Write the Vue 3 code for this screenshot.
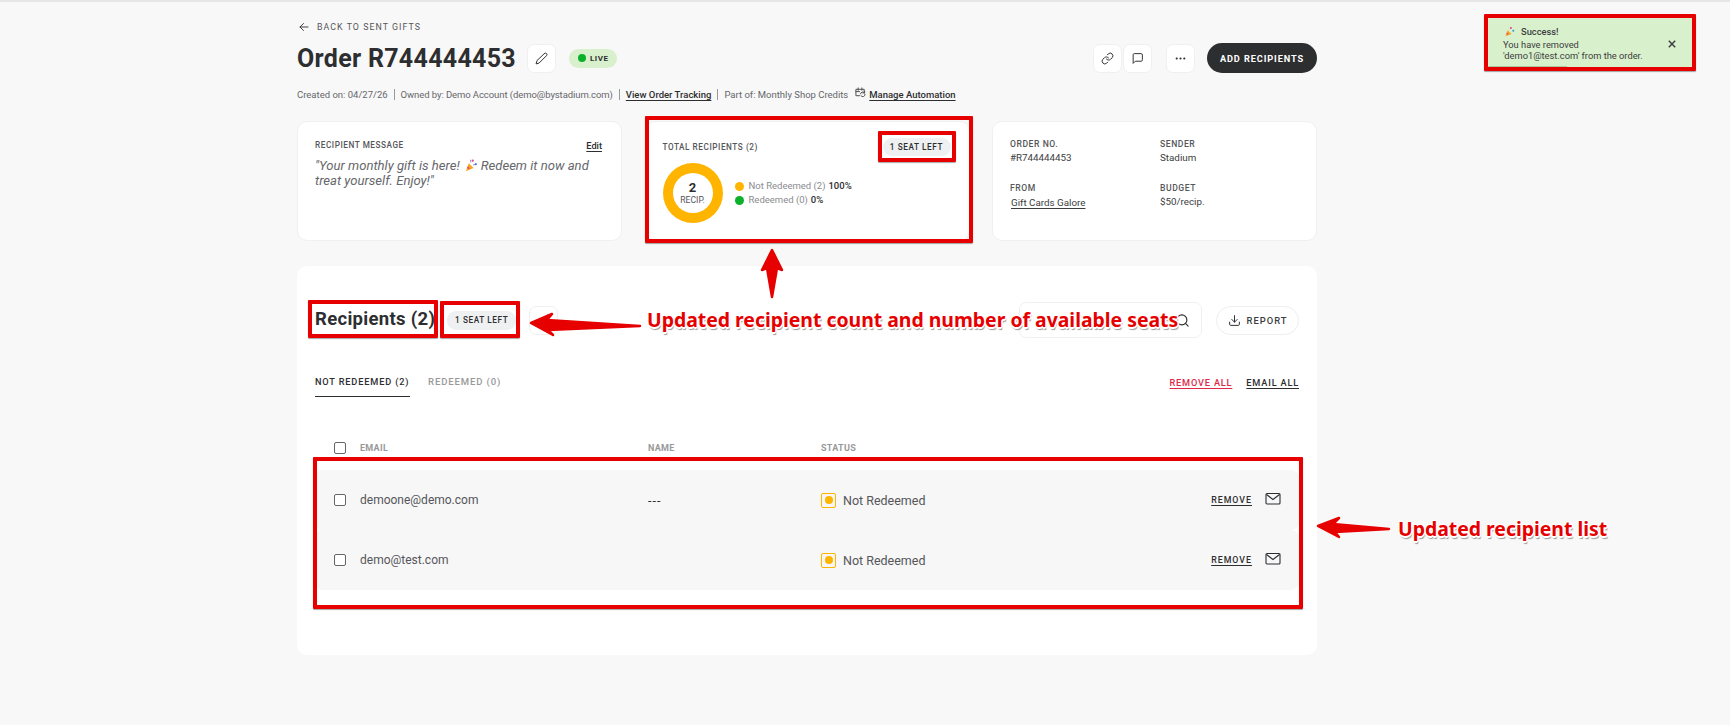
<script setup>
const recipients = [
  { email: "demoone@demo.com", name: "---" },
  { email: "demo@test.com", name: "" },
];

// red review markup drawn over the page
const marks = [
  { x: 645, y: 116, w: 328, h: 127 },
  { x: 878, y: 131, w: 78, h: 31 },
  { x: 308, y: 300, w: 130, h: 38 },
  { x: 440, y: 301, w: 80, h: 37 },
  { x: 313, y: 457, w: 990, h: 152 },
  { x: 1484, y: 14, w: 212, h: 57 },
];

const box = (m) => ({
  left: m.x + "px",
  top: m.y + "px",
  width: m.w + "px",
  height: m.h + "px",
});
</script>

<template>
  <div class="page">
    <div class="top-line"></div>
    <div class="wrap">
      <div class="back">
        <svg width="12" height="12" viewBox="0 0 24 24" class="ico"><path d="M20 12H4M11 5l-7 7 7 7" /></svg>
        <span>BACK TO SENT GIFTS</span>
      </div>

      <div class="title-row">
        <h1>Order R744444453</h1>
        <button class="icon-btn edit">
          <svg width="13" height="13" viewBox="0 0 24 24" class="ico"><path d="M17 3a2.85 2.83 0 1 1 4 4L7.5 20.5 2 22l1.5-5.5Z" /></svg>
        </button>
        <span class="live"><i></i>LIVE</span>
        <div class="spacer"></div>
        <button class="icon-btn">
          <svg width="13" height="13" viewBox="0 0 24 24" class="ico"><path d="M10 13a5 5 0 0 0 7.54.54l3-3a5 5 0 0 0-7.07-7.07l-1.72 1.71" /><path d="M14 11a5 5 0 0 0-7.54-.54l-3 3a5 5 0 0 0 7.07 7.07l1.71-1.71" /></svg>
        </button>
        <button class="icon-btn chat">
          <svg width="13" height="13" viewBox="0 0 24 24" class="ico"><path d="M21 15a2 2 0 0 1-2 2H8l-4 4V5a2 2 0 0 1 2-2h13a2 2 0 0 1 2 2z" /></svg>
        </button>
        <button class="icon-btn more">
          <svg width="13" height="13" viewBox="0 0 24 24"><circle cx="5" cy="12" r="2" fill="#2d2e30" /><circle cx="12" cy="12" r="2" fill="#2d2e30" /><circle cx="19" cy="12" r="2" fill="#2d2e30" /></svg>
        </button>
        <button class="add">ADD RECIPIENTS</button>
      </div>

      <div class="meta">
        <span>Created on: 04/27/26</span>
        <b class="sep"></b>
        <span class="owner">Owned by: Demo Account (demo@bystadium.com)</span>
        <b class="sep"></b>
        <a>View Order Tracking</a>
        <b class="sep"></b>
        <span>Part of: Monthly Shop Credits</span>
        <svg width="11" height="11" viewBox="0 0 24 24" class="ico auto"><path d="M10 19H2V5h18v4M2 10h8M7 2v5M15 2v5" /><path d="M22 16a5 5 0 0 1-9 3M12 15a5 5 0 0 1 9-2M21 9v4h-4" /></svg>
        <a>Manage Automation</a>
      </div>

      <div class="cards">
        <div class="card msg">
          <div class="msg-head">
            <span class="label">RECIPIENT MESSAGE</span>
            <a class="edit-link">Edit</a>
          </div>
          <div class="msg-text">
            <div class="msg-line">"Your monthly gift is here!<svg width="14" height="14" viewBox="0 0 16 16" class="party"><path d="M2 15l3.5-9 5.5 5.500z" fill="#f5a623" /><path d="M4.200 9.500l2.600 2.600-1.600.7-1.700-1.700z" fill="#e0457b" /><circle cx="10" cy="3" r="1.200" fill="#e0457b" /><circle cx="13.500" cy="7" r="1.200" fill="#3f8fe0" /><path d="M7.500 5c.5-1.500 0-3 0-3M10.500 8c1.500-1 3.500-.5 3.500-.5" stroke="#7a5bd0" fill="none" /></svg>Redeem it now and</div>
            <div class="msg-line">treat yourself. Enjoy!"</div>
          </div>
        </div>

        <div class="card total">
          <div class="total-head">
            <span class="label">TOTAL RECIPIENTS (2)</span>
            <span class="seats">1 SEAT LEFT</span>
          </div>
          <div class="total-body">
            <div class="donut">
              <div class="donut-hole"><strong>2</strong><small>RECIP.</small></div>
            </div>
            <div class="legend">
              <div><i class="amber"></i><span>Not Redeemed (2)</span> <b>100%</b></div>
              <div><i class="green"></i><span>Redeemed (0)</span> <b>0%</b></div>
            </div>
          </div>
        </div>

        <div class="card info">
          <div>
            <div class="label">ORDER NO.</div>
            <div class="val">#R744444453</div>
          </div>
          <div>
            <div class="label">SENDER</div>
            <div class="val">Stadium</div>
          </div>
          <div>
            <div class="label">FROM</div>
            <a class="val link">Gift Cards Galore</a>
          </div>
          <div>
            <div class="label">BUDGET</div>
            <div class="val">$50/recip.</div>
          </div>
        </div>
      </div>

      <section class="main">
        <div class="main-head">
          <h2>Recipients (2)</h2>
          <span class="seats big">1 SEAT LEFT</span>
          <button class="icon-btn main-edit">
            <svg width="13" height="13" viewBox="0 0 24 24" class="ico"><path d="M17 3a2.85 2.83 0 1 1 4 4L7.5 20.5 2 22l1.5-5.5Z" /></svg>
          </button>
          <div class="spacer"></div>
          <div class="search">
            <svg width="15" height="15" viewBox="0 0 24 24" class="ico"><circle cx="11" cy="11" r="8" /><path d="M21 21l-4.300-4.300" /></svg>
          </div>
          <button class="report">
            <svg width="13" height="13" viewBox="0 0 24 24" class="ico"><path d="M3 15v4a2 2 0 0 0 2 2h14a2 2 0 0 0 2-2v-4M7 10l5 5 5-5M12 15V3" /></svg>
            REPORT
          </button>
        </div>

        <div class="tabs">
          <span class="tab on">NOT REDEEMED (2)</span>
          <span class="tab">REDEEMED (0)</span>
          <div class="spacer"></div>
          <a class="bulk red">REMOVE ALL</a>
          <a class="bulk">EMAIL ALL</a>
        </div>

        <div class="thead row-grid">
          <span class="check"></span>
          <span>EMAIL</span>
          <span>NAME</span>
          <span>STATUS</span>
        </div>

        <div class="rows">
          <div v-for="r in recipients" :key="r.email" class="row row-grid">
            <span class="check"></span>
            <span class="email">{{ r.email }}</span>
            <span class="name">{{ r.name }}</span>
            <span class="status"><em><i></i></em>Not Redeemed</span>
            <span class="actions">
              <a>REMOVE</a>
              <svg width="16" height="14" viewBox="0 0 16 14" class="mail"><rect x="1" y="1.500" width="14" height="10.500" rx="1" /><path d="M1.500 2.500L8 7.500l6.500-5" /></svg>
            </span>
          </div>
        </div>
      </section>
    </div>

    <div class="toast">
      <div class="toast-title">
        <svg width="11" height="11" viewBox="0 0 16 16"><path d="M2 15l3.500-9 5.500 5.500z" fill="#f5a623" /><path d="M4.200 9.500l2.600 2.600-1.600.7-1.700-1.700z" fill="#e0457b" /><circle cx="10" cy="3" r="1.500" fill="#e0457b" /><circle cx="13.500" cy="7" r="1.500" fill="#3f8fe0" /></svg>
        <span>Success!</span>
      </div>
      <div class="toast-body">You have removed<br />'demo1@test.com' from the order.</div>
      <svg width="8" height="8" viewBox="0 0 10 10" class="toast-x"><path d="M1 1l8 8M9 1l-8 8" /></svg>
      <div class="toast-bar"></div>
    </div>

    <div v-for="(m, i) in marks" :key="i" class="mark" :style="box(m)"></div>

    <svg class="arrows" width="1730" height="725" viewBox="0 0 1730 725">
      <g fill="#e60000" stroke="#e60000" stroke-width="2.500" stroke-linejoin="round">
        <path d="M772 250L782 270L777 268L772 297L767 268L762 270Z" />
        <path d="M531 323L552 314L547 320L640 326L548 330L553 335Z" />
        <path d="M1318 526L1339 518L1333 524L1389 529L1335 532L1339 537Z" />
      </g>
    </svg>
    <div class="note note-a">Updated recipient count and number of available seats</div>
    <div class="note note-b">Updated recipient list</div>
  </div>
</template>

<style>
html,
body {
  margin: 0;
  background: #f8f8f8;
}
</style>

<style scoped>
.page {
  position: relative;
  width: 1730px;
  height: 725px;
  overflow: hidden;
  background: #f8f8f8;
  font-family: Roboto, "Liberation Sans", sans-serif;
  color: #2d2e30;
}

.top-line {
  height: 2px;
  background: #e6e6e8;
}

.wrap {
  width: 1020px;
  margin-left: 297px;
  padding-top: 18px;
}

.spacer {
  flex: 1;
}

.ico {
  fill: none;
  stroke: #2d2e30;
  stroke-width: 1.8;
  stroke-linecap: round;
  stroke-linejoin: round;
}

.back {
  display: flex;
  align-items: center;
  gap: 7px;
  height: 14px;
  padding-left: 1px;
  font-size: 8.8px;
  letter-spacing: 1.05px;
  color: #55565a;
}

.title-row {
  display: flex;
  align-items: center;
  height: 30px;
  margin-top: 9px;
}

h1 {
  margin: 0 11px 0 0;
  font-size: 25px;
  font-weight: 700;
  letter-spacing: 0.3px;
}

.icon-btn {
  display: flex;
  align-items: center;
  justify-content: center;
  width: 29px;
  height: 29px;
  padding: 0;
  background: #fff;
  border: 1px solid #f0f0f0;
  border-radius: 7px;
}

.live {
  display: flex;
  align-items: center;
  gap: 4px;
  height: 19px;
  margin-left: 13px;
  padding: 0 9px;
  background: #d8f0cc;
  border-radius: 10px;
  font-size: 8px;
  font-weight: 700;
  letter-spacing: 0.5px;
}

.live i {
  width: 8px;
  height: 8px;
  background: #0db02b;
  border-radius: 50%;
}

.chat {
  margin-left: 1px;
}

.more {
  margin-left: 14px;
}

.add {
  width: 110px;
  height: 30px;
  margin-left: 12px;
  padding: 0;
  background: #2d2e30;
  border: 0;
  border-radius: 15px;
  color: #fff;
  font-family: inherit;
  font-size: 9.2px;
  font-weight: 700;
  letter-spacing: 0.9px;
}

.meta {
  display: flex;
  align-items: center;
  height: 14px;
  margin-top: 14px;
  font-size: 9.5px;
  color: #66676b;
}

.owner {
  letter-spacing: -0.08px;
}

.meta a,
.edit-link,
.link {
  color: #2d2e30;
  text-decoration: underline;
  text-underline-offset: 2px;
}

.meta a {
  font-weight: 500;
}

.sep {
  width: 1px;
  height: 11px;
  margin: 0 6px;
  background: #999;
}

.auto {
  margin: -3px 3px 0 7px;
  stroke: #444;
  stroke-width: 2;
}

.cards {
  display: flex;
  gap: 22.5px;
  margin-top: 20px;
}

.card {
  box-sizing: border-box;
  width: 325px;
  height: 120px;
  padding: 18px;
  background: #fff;
  border: 1px solid #f0f0f0;
  border-radius: 10px;
}

.label {
  font-size: 8.2px;
  font-weight: 500;
  letter-spacing: 0.55px;
  color: #55565a;
}

.msg-head,
.total-head {
  display: flex;
  align-items: center;
  justify-content: space-between;
}

.msg {
  padding: 16px 18px 0 17px;
}

.edit-link {
  font-size: 9.2px;
  font-weight: 500;
  margin-top: 2px;
  margin-right: 1px;
}

.msg-text {
  margin-top: 7px;
  font-size: 13.1px;
  line-height: 15px;
  font-style: italic;
  color: #66676b;
}

.msg-line {
  white-space: nowrap;
}

.party {
  vertical-align: -2px;
  margin: 0 3px 0 4px;
}

.total {
  padding: 10px 17px 0 17px;
}

.total-head {
  height: 30px;
}

.seats {
  box-sizing: border-box;
  display: flex;
  align-items: center;
  justify-content: center;
  width: 68px;
  height: 18px;
  margin-right: 1px;
  background: #eff0f2;
  border-radius: 9px;
  font-size: 8.2px;
  font-weight: 500;
  letter-spacing: 0.6px;
}

.seats.big {
  width: 69px;
  height: 19px;
  margin-left: 12px;
}

.total-body {
  display: flex;
  align-items: center;
  gap: 12px;
  margin-top: 1px;
}

.donut {
  display: flex;
  align-items: center;
  justify-content: center;
  width: 60px;
  height: 60px;
  background: #ffb400;
  border-radius: 50%;
}

.donut-hole {
  display: flex;
  flex-direction: column;
  align-items: center;
  justify-content: center;
  width: 40px;
  height: 40px;
  background: #fff;
  border-radius: 50%;
}

.donut-hole strong {
  font-size: 13px;
  line-height: 14px;
}

.donut-hole small {
  font-size: 8.6px;
  line-height: 10px;
  color: #55565a;
}

.legend {
  font-size: 9.5px;
  line-height: 14px;
  color: #8a8b8f;
}

.legend div {
  display: flex;
  align-items: center;
  gap: 3px;
}

.legend i {
  width: 9px;
  height: 9px;
  margin-right: 2px;
  border-radius: 50%;
}

.legend b {
  color: #2d2e30;
  font-weight: 500;
}

.amber {
  background: #ffb400;
}

.green {
  background: #0db02b;
}

.info {
  display: grid;
  grid-template-columns: 150px 1fr;
  grid-template-rows: 44px 44px;
  padding: 17px 17px 0;
}

.info .label {
  font-size: 8.6px;
}

.val {
  display: block;
  margin-top: 3px;
  font-size: 9.8px;
  color: #3c3d40;
}

.val.link {
  width: fit-content;
  margin-top: 4px;
  margin-left: 1px;
}

.main {
  box-sizing: border-box;
  height: 389px;
  margin-top: 25px;
  padding: 36px 18px 0;
  background: #fff;
  border-radius: 10px;
}

.main-head {
  display: flex;
  align-items: center;
  height: 36px;
}

h2 {
  margin: -3px 0 0;
  font-size: 18.5px;
  font-weight: 700;
  letter-spacing: 0.3px;
}

.main-edit {
  margin-left: 12px;
}

.search {
  box-sizing: border-box;
  display: flex;
  align-items: center;
  justify-content: flex-end;
  width: 183px;
  height: 36px;
  padding-right: 11px;
  border: 1px solid #f0f0f0;
  border-radius: 7px;
}

.report {
  display: flex;
  align-items: center;
  justify-content: center;
  gap: 6px;
  width: 83px;
  height: 29px;
  margin-left: 14px;
  padding: 0;
  background: #fff;
  border: 1px solid #eee;
  border-radius: 15px;
  color: #3c3d40;
  font-family: inherit;
  font-size: 9.4px;
  font-weight: 500;
  letter-spacing: 1px;
}

.tabs {
  display: flex;
  align-items: flex-start;
  height: 24px;
  margin-top: 36px;
  font-size: 9.5px;
  font-weight: 500;
  letter-spacing: 0.9px;
}

.tab {
  height: 23px;
  padding-top: 2px;
  box-sizing: border-box;
  color: #999;
  white-space: nowrap;
}

.tab.on {
  width: 95px;
  margin-right: 18px;
  font-size: 9.2px;
  letter-spacing: 0.85px;
  color: #2d2e30;
  border-bottom: 1px solid #2d2e30;
}

.bulk {
  margin-left: 14px;
  padding-top: 3px;
  font-size: 9.2px;
  letter-spacing: 0.82px;
  color: #2d2e30;
  text-decoration: underline;
  text-underline-offset: 2px;
}

.bulk.red {
  color: #e0284a;
}

.row-grid {
  display: grid;
  grid-template-columns: 26px 288px 173px 1fr auto;
  align-items: center;
  padding-left: 19px;
}

.thead {
  height: 16px;
  margin-top: 42px;
  margin-bottom: 14px;
  font-size: 9px;
  font-weight: 700;
  letter-spacing: 0.3px;
  color: #999;
}

.check {
  box-sizing: border-box;
  width: 12px;
  height: 12px;
  background: #fff;
  border: 1.500px solid #66676b;
  border-radius: 2px;
}

.row {
  height: 60px;
  background: #f7f7f7;
  border-radius: 8px;
  font-size: 12.5px;
  color: #55565a;
}

.email {
  font-size: 12px;
}

.name {
  letter-spacing: 1px;
  color: #2d2e30;
}

.status {
  display: flex;
  align-items: center;
  gap: 7px;
}

.status em {
  box-sizing: border-box;
  display: flex;
  align-items: center;
  justify-content: center;
  width: 15px;
  height: 15px;
  border: 1px solid #ffb400;
  border-radius: 2px;
}

.status i {
  width: 8px;
  height: 8px;
  background: #ffb400;
  border-radius: 50%;
}

.actions {
  display: flex;
  align-items: center;
  gap: 13px;
  padding-right: 18px;
}

.actions a {
  font-size: 8.8px;
  font-weight: 500;
  letter-spacing: 1px;
  color: #2d2e30;
  text-decoration: underline;
  text-underline-offset: 2px;
}

.mail {
  fill: none;
  stroke: #2d2e30;
  stroke-width: 1.1;
  margin-top: -3px;
}

.toast {
  position: absolute;
  left: 1488px;
  top: 18px;
  box-sizing: border-box;
  width: 204px;
  height: 49px;
  padding: 8px 0 0 15px;
  background: #d8f0cc;
  font-size: 9.3px;
  color: #3c3d40;
}

.toast-title {
  display: flex;
  align-items: center;
  gap: 6px;
  margin-bottom: 3px;
  margin-left: 1px;
  font-weight: 500;
}

.toast-body {
  line-height: 10.500px;
}

.toast-x {
  position: absolute;
  right: 16px;
  top: 22px;
  fill: none;
  stroke: #3c3d40;
  stroke-width: 1.8;
}

.toast-bar {
  position: absolute;
  left: 0;
  bottom: 0;
  width: 79px;
  height: 1px;
  background: #a9c99d;
}

.mark {
  position: absolute;
  box-sizing: border-box;
  border: 4px solid #e60000;
  border-radius: 1px;
  box-shadow: 0 1px 1px rgba(0, 0, 0, 0.35);
}

.arrows {
  position: absolute;
  left: 0;
  top: 0;
}

.note {
  position: absolute;
  font-family: "Noto Sans", sans-serif;
  font-size: 19.4px;
  font-weight: 700;
  line-height: 26px;
  white-space: nowrap;
  color: #e60000;
  text-shadow: 1.5px 0 0 #fff, -1.5px 0 0 #fff, 0 1.5px 0 #fff, 0 -1.5px 0 #fff, 1px 1px 0 #fff, -1px -1px 0 #fff, 1px -1px 0 #fff, -1px 1px 0 #fff, 1px 3px 1px #999;
}

.note-a {
  left: 647px;
  top: 307px;
}

.note-b {
  left: 1398px;
  top: 516px;
}
</style>
